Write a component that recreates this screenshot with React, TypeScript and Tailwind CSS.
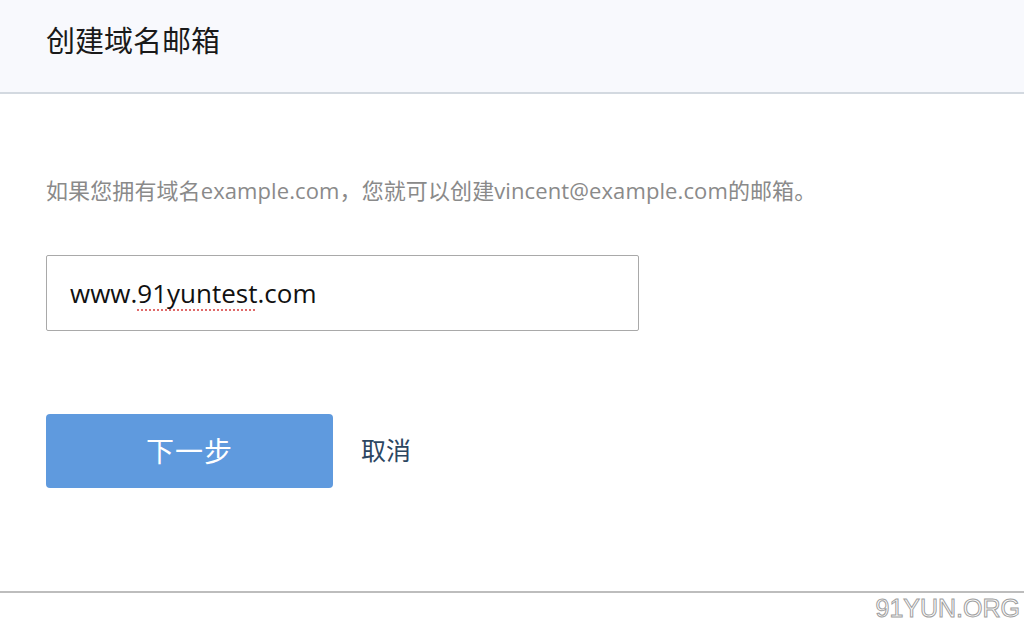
import React, { useState } from 'react';

const FONT = "font-['Open_Sans','Noto_Sans_CJK_SC',sans-serif]";

export default function App() {
  const [domain, setDomain] = useState('www.91yuntest.com');

  return (
    <div className={`w-[1024px] h-[621px] bg-white flex flex-col overflow-hidden ${FONT}`}>
      {/* Header */}
      <div className="h-[94px] shrink-0 bg-[#f8f9fd] border-b-2 border-[#d3d9e0] flex items-center pl-[46px] pb-[12px]">
        <h1 className="text-[29px] leading-none text-[#1a1a1a]">创建域名邮箱</h1>
      </div>

      {/* Body */}
      <div className="flex-1 flex flex-col pl-[46px]">
        <p className="mt-[83px] text-[22px] leading-[26px] text-[#8a8a8a] tracking-[0.1px]">
          如果您拥有域名example.com，您就可以创建vincent@example.com的邮箱。
        </p>

        <div className="mt-[52px] w-[593px] h-[76px] border border-[#a9a9a9] rounded-[2px] flex items-center pl-[23px] pt-[1px]">
          <span className="text-[26px] text-[#111]">
            www.
            <span className="underline decoration-dotted decoration-[#e06a6a] decoration-2 underline-offset-[6px]">91yuntest</span>
            .com
          </span>
          <input
            className="hidden"
            value={domain}
            onChange={e => setDomain(e.target.value)}
          />
        </div>

        <div className="mt-[83px] flex items-center">
          <button className="w-[287px] h-[74px] rounded-[4px] bg-[#5f9ade] text-white text-[28px] tracking-[1px]">
            下一步
          </button>
          <button className="ml-[28px] text-[25px] text-[#2c4661]">取消</button>
        </div>
      </div>

      {/* Footer */}
      <div className="h-[30px] shrink-0 border-t-2 border-[#bdbdbd] flex justify-end items-start pr-[4px]">
        <span className="mt-[3px] text-[25px] leading-[24px] text-white [-webkit-text-stroke:1px_#a0a0a0] font-['Liberation_Sans',sans-serif]">
          91YUN.ORG
        </span>
      </div>
    </div>
  );
}
